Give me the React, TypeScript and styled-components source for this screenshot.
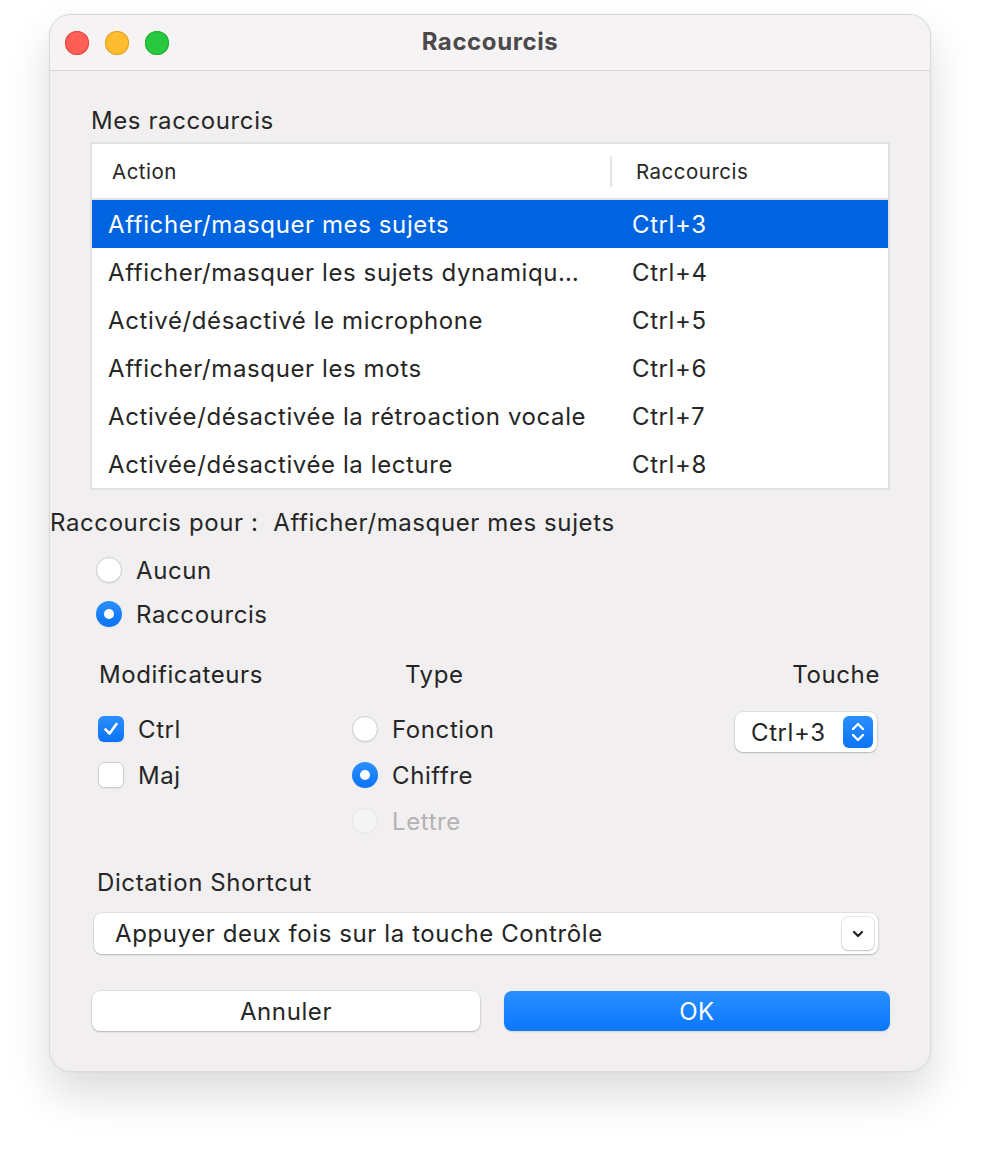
import { createGlobalStyle } from 'styled-components';
import styled from 'styled-components';

const GlobalStyle = createGlobalStyle`
  html, body {
    margin: 0;
    padding: 0;
    background: #ffffff;
  }
  body {
    font-family: Inter, "Noto Sans", "Liberation Sans", sans-serif;
    color: #242424;
    -webkit-font-smoothing: antialiased;
  }
`;

const TEXT = `
  font-size: 24px;
  letter-spacing: 0.6px;
`;

const Page = styled.div`
  padding: 14px 0 0 49px;
  height: 1158px;
  box-sizing: border-box;
`;

const Window = styled.div`
  width: 882px;
  height: 1058px;
  box-sizing: border-box;
  background: #f1eff0;
  border: 1px solid #dcdadb;
  border-radius: 22px;
  box-shadow: 0 22px 44px rgba(0, 0, 0, 0.14), 0 0 2px rgba(0, 0, 0, 0.08);
  overflow: hidden;
  display: flex;
  flex-direction: column;
`;

const TitleBar = styled.div`
  height: 55px;
  flex-shrink: 0;
  background: #f5f3f4;
  border-bottom: 1px solid #d7d5d6;
  display: grid;
  grid-template-columns: 1fr auto 1fr;
  align-items: center;
  padding: 0 15px;
`;

const Lights = styled.div`
  display: flex;
  gap: 16px;
`;

const Light = styled.span<{ $fill: string; $edge: string }>`
  width: 24px;
  height: 24px;
  border-radius: 50%;
  background: ${(p) => p.$fill};
  box-shadow: inset 0 0 0 1px ${(p) => p.$edge};
`;

const Title = styled.div`
  font-size: 24px;
  font-weight: 700;
  color: #4b494a;
  letter-spacing: 0.6px;
  margin-bottom: 2px;
`;

const Body = styled.div`
  display: flex;
  flex-direction: column;
  padding: 35px 40px 0 0;
`;

const Label = styled.div<{ $indent?: number; $top?: number }>`
  ${TEXT}
  line-height: 30px;
  color: #262626;
  margin-left: ${(p) => p.$indent ?? 0}px;
  margin-top: ${(p) => p.$top ?? 0}px;
  white-space: nowrap;
`;

const Table = styled.div`
  margin: 6px 0 0 40px;
  width: 800px;
  box-sizing: border-box;
  border: 2px solid #e2e1e1;
  background: #ffffff;
`;

const HeaderRow = styled.div`
  display: grid;
  grid-template-columns: 518px 1fr;
  height: 54px;
  align-items: center;
  border-bottom: 2px solid #e4e3e3;
  font-size: 20.5px;
  letter-spacing: 0.5px;
  color: #262626;
`;

const HeaderCell = styled.div<{ $sep?: boolean }>`
  padding-left: ${(p) => (p.$sep ? 24 : 20)}px;
  height: 31px;
  line-height: 31px;
  border-left: ${(p) => (p.$sep ? '2px solid #e6e5e5' : 'none')};
`;

const Row = styled.div<{ $selected?: boolean }>`
  display: grid;
  grid-template-columns: 518px 1fr;
  height: 48px;
  align-items: center;
  ${TEXT}
  background: ${(p) => (p.$selected ? '#0064e1' : 'transparent')};
  color: ${(p) => (p.$selected ? '#ffffff' : '#262626')};
`;

const Cell = styled.div<{ $second?: boolean }>`
  padding-left: ${(p) => (p.$second ? 22 : 16)}px;
  white-space: nowrap;
  overflow: hidden;
  text-overflow: ellipsis;
`;

const RadioList = styled.div`
  display: flex;
  flex-direction: column;
  margin: 10px 0 0 46px;
`;

const OptionRow = styled.div<{ $disabled?: boolean }>`
  display: flex;
  align-items: center;
  gap: 14px;
  height: 44px;
  ${TEXT}
  color: ${(p) => (p.$disabled ? '#b4b2b3' : '#262626')};
`;

const RadioDot = styled.span<{ $on?: boolean; $disabled?: boolean }>`
  width: 26px;
  height: 26px;
  box-sizing: border-box;
  border-radius: 50%;
  flex-shrink: 0;
  display: flex;
  align-items: center;
  justify-content: center;
  background: ${(p) =>
    p.$on ? 'linear-gradient(#2b8eff, #0a74f5)' : p.$disabled ? '#f5f4f5' : '#ffffff'};
  border: ${(p) =>
    p.$on ? 'none' : p.$disabled ? '1px solid #e6e4e5' : '1px solid #cfcdce'};
  box-shadow: ${(p) => (p.$disabled ? 'none' : '0 1px 1px rgba(0, 0, 0, 0.06)')};

  &::after {
    content: '';
    display: ${(p) => (p.$on ? 'block' : 'none')};
    width: 10px;
    height: 10px;
    border-radius: 50%;
    background: #ffffff;
  }
`;

const CheckBox = styled.span<{ $on?: boolean }>`
  width: 26px;
  height: 26px;
  box-sizing: border-box;
  border-radius: 6px;
  flex-shrink: 0;
  display: flex;
  align-items: center;
  justify-content: center;
  background: ${(p) => (p.$on ? 'linear-gradient(#2b8eff, #0a74f5)' : '#ffffff')};
  border: ${(p) => (p.$on ? 'none' : '1px solid #cfcdce')};
  box-shadow: 0 1px 1px rgba(0, 0, 0, 0.06);
`;

const Columns = styled.div`
  display: flex;
  margin: 24px 10px 0 48px;
`;

const Column = styled.div<{ $width?: number; $right?: boolean }>`
  display: flex;
  flex-direction: column;
  align-items: ${(p) => (p.$right ? 'flex-end' : 'flex-start')};
  width: ${(p) => (p.$width ? `${p.$width}px` : 'auto')};
  flex: ${(p) => (p.$width ? 'none' : '1')};
`;

const ColumnHead = styled.div<{ $indent?: number }>`
  ${TEXT}
  line-height: 30px;
  margin-left: ${(p) => p.$indent ?? 0}px;
  margin-bottom: 16px;
`;

const ColumnItems = styled.div`
  display: flex;
  flex-direction: column;
`;

const ItemRow = styled(OptionRow)`
  height: 46px;
`;

const KeyPopup = styled.div`
  display: flex;
  align-items: center;
  justify-content: space-between;
  width: 142px;
  height: 40px;
  box-sizing: border-box;
  margin: 6px 3px 0 0;
  padding: 0 4px 0 16px;
  background: #ffffff;
  border-radius: 8px;
  box-shadow: 0 0 0 1px rgba(0, 0, 0, 0.06), 0 1px 2px rgba(0, 0, 0, 0.2);
  ${TEXT}
`;

const Stepper = styled.span`
  width: 30px;
  height: 32px;
  border-radius: 6px;
  background: linear-gradient(#2b8eff, #0a74f5);
  display: flex;
  align-items: center;
  justify-content: center;
`;

const Dropdown = styled.div`
  margin: 15px 0 0 44px;
  width: 784px;
  height: 41px;
  box-sizing: border-box;
  display: flex;
  align-items: center;
  justify-content: space-between;
  padding: 0 4px 0 21px;
  background: #ffffff;
  border-radius: 8px;
  box-shadow: 0 0 0 1px rgba(0, 0, 0, 0.06), 0 1px 2px rgba(0, 0, 0, 0.2);
  ${TEXT}
`;

const ChevronBox = styled.span`
  width: 32px;
  height: 33px;
  border-radius: 6px;
  background: #ffffff;
  box-shadow: 0 0 0 1px rgba(0, 0, 0, 0.08), 0 1px 2px rgba(0, 0, 0, 0.18);
  display: flex;
  align-items: center;
  justify-content: center;
`;

const Buttons = styled.div`
  display: flex;
  gap: 24px;
  margin: 37px 0 0 42px;
`;

const Button = styled.button<{ $primary?: boolean }>`
  height: 40px;
  width: ${(p) => (p.$primary ? 387 : 389)}px;
  border: none;
  border-radius: 8px;
  font-family: inherit;
  ${TEXT}
  color: ${(p) => (p.$primary ? '#ffffff' : '#262626')};
  background: ${(p) => (p.$primary ? 'linear-gradient(#2a90ff, #0a76ff)' : '#ffffff')};
  box-shadow: ${(p) =>
    p.$primary
      ? '0 1px 2px rgba(0, 0, 0, 0.12)'
      : '0 0 0 1px rgba(0, 0, 0, 0.06), 0 1px 2px rgba(0, 0, 0, 0.2)'};
  padding: 0;
`;

const rows = [
  ['Afficher/masquer mes sujets', 'Ctrl+3'],
  ['Afficher/masquer les sujets dynamiqu…', 'Ctrl+4'],
  ['Activé/désactivé le microphone', 'Ctrl+5'],
  ['Afficher/masquer les mots', 'Ctrl+6'],
  ['Activée/désactivée la rétroaction vocale', 'Ctrl+7'],
  ['Activée/désactivée la lecture', 'Ctrl+8'],
];

function Check() {
  return (
    <svg width="18" height="18" viewBox="0 0 18 18">
      <path d="M3.5 9.5 L7.5 13.5 L14.5 4" fill="none" stroke="#fff" strokeWidth="2.6" strokeLinecap="round" strokeLinejoin="round" />
    </svg>
  );
}

export default function App() {
  return (
    <>
      <GlobalStyle />
      <Page>
        <Window>
          <TitleBar>
            <Lights>
              <Light $fill="#ff5f57" $edge="#e2463f" />
              <Light $fill="#febc2e" $edge="#dfa023" />
              <Light $fill="#28c840" $edge="#1dad2b" />
            </Lights>
            <Title>Raccourcis</Title>
            <div />
          </TitleBar>
          <Body>
            <Label $indent={41}>Mes raccourcis</Label>
            <Table>
              <HeaderRow>
                <HeaderCell>Action</HeaderCell>
                <HeaderCell $sep>Raccourcis</HeaderCell>
              </HeaderRow>
              {rows.map(([action, key], i) => (
                <Row key={key} $selected={i === 0}>
                  <Cell>{action}</Cell>
                  <Cell $second>{key}</Cell>
                </Row>
              ))}
            </Table>

            <Label $top={18}>Raccourcis pour :&nbsp; Afficher/masquer mes sujets</Label>
            <RadioList>
              <OptionRow>
                <RadioDot />
                Aucun
              </OptionRow>
              <OptionRow>
                <RadioDot $on />
                Raccourcis
              </OptionRow>
            </RadioList>

            <Columns>
              <Column $width={254}>
                <ColumnHead $indent={1}>Modificateurs</ColumnHead>
                <ColumnItems>
                  <ItemRow>
                    <CheckBox $on>
                      <Check />
                    </CheckBox>
                    Ctrl
                  </ItemRow>
                  <ItemRow>
                    <CheckBox />
                    Maj
                  </ItemRow>
                </ColumnItems>
              </Column>
              <Column>
                <ColumnHead $indent={53}>Type</ColumnHead>
                <ColumnItems>
                  <ItemRow>
                    <RadioDot />
                    Fonction
                  </ItemRow>
                  <ItemRow>
                    <RadioDot $on />
                    Chiffre
                  </ItemRow>
                  <ItemRow $disabled>
                    <RadioDot $disabled />
                    Lettre
                  </ItemRow>
                </ColumnItems>
              </Column>
              <Column $right>
                <ColumnHead>Touche</ColumnHead>
                <KeyPopup>
                  Ctrl+3
                  <Stepper>
                    <svg width="18" height="26" viewBox="0 0 18 26">
                      <path d="M4 10 L9 5 L14 10 M4 16 L9 21 L14 16" fill="none" stroke="#fff" strokeWidth="2.4" strokeLinecap="round" strokeLinejoin="round" />
                    </svg>
                  </Stepper>
                </KeyPopup>
              </Column>
            </Columns>

            <Label $indent={47} $top={24}>Dictation Shortcut</Label>
            <Dropdown>
              Appuyer deux fois sur la touche Contrôle
              <ChevronBox>
                <svg width="14" height="10" viewBox="0 0 14 10">
                  <path d="M3 3 L7 7 L11 3" fill="none" stroke="#222" strokeWidth="2.2" strokeLinecap="round" strokeLinejoin="round" />
                </svg>
              </ChevronBox>
            </Dropdown>

            <Buttons>
              <Button>Annuler</Button>
              <Button $primary>OK</Button>
            </Buttons>
          </Body>
        </Window>
      </Page>
    </>
  );
}
